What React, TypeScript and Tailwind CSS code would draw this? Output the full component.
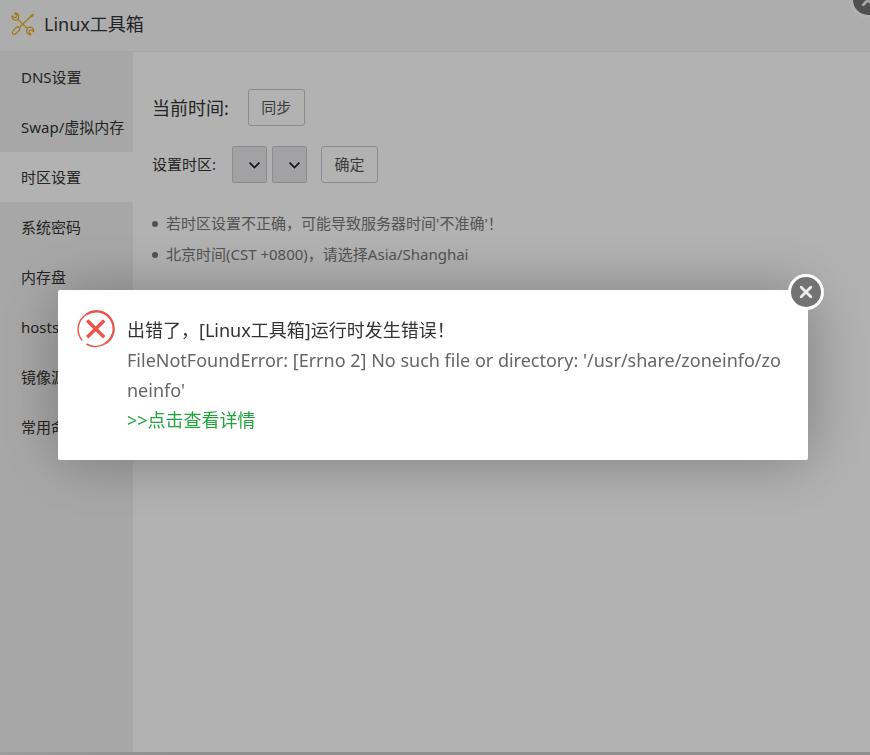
import { useState } from 'react';

const menu = ['DNS设置', 'Swap/虚拟内存', '时区设置', '系统密码', '内存盘', 'hosts管理', '镜像源', '常用命令'];

const tips = ["若时区设置不正确，可能导致服务器时间'不准确'！", '北京时间(CST +0800)，请选择Asia/Shanghai'];

function ToolsIcon() {
  return (
    <svg
      className="size-6 shrink-0 text-[#e8ab1c]"
      viewBox="0 0 24 24"
      fill="none"
      stroke="currentColor"
      strokeWidth="1.2"
      strokeLinecap="round"
      strokeLinejoin="round"
      aria-hidden="true"
    >
      <path d="M3.6 1.2C6.6.8 8.4 3 7.6 5.4L7.4 6.8 6 8 4.4 8.2C2 8 .6 6 1.2 3.8L3.2 5.6 5.4 5.2 5.8 3.2Z" />
      <path d="M7.2 7.6 16.4 16.6" />
      <path d="M20 22.6C17 22.8 15.2 20.4 15.6 18L16 16.4 17.4 15.4 19 15.2C21.6 15 23.2 17.4 22.6 19.8L20.6 18 18.6 18.4 18.2 20.6Z" />
      <path d="M22.2 2.2 20.2 3 19.4 4.4 20.2 4.8 21.6 4ZM19.4 4.8 8.8 15" />
      <path d="M6.8 14.6 8.8 16.4 8.6 17.8 4.8 21.8C2.8 23.4.4 21.4 1.8 19.2L5.4 15.2Z" />
    </svg>
  );
}

function ErrorIcon() {
  return (
    <svg className="mt-5 size-[38px] shrink-0" viewBox="0 0 38 38" fill="none" stroke="#eb5548" aria-hidden="true">
      <path d="M5.2 30.4A17.3 17.3 0 0 1 9.5 4.4" strokeWidth="1.5" />
      <path d="M9.5 4.4A17.3 17.3 0 1 1 28 33.6" strokeWidth="2.3" />
      <path d="M28 33.6A17.3 17.3 0 0 1 9.4 34" strokeWidth="1.7" />
      <path d="M10.2 10.6 27.2 27.2M27.2 10.6 10.2 27.2" strokeWidth="3.5" />
    </svg>
  );
}

function CloseButton({ label, onClick }: { label: string; onClick?: () => void }) {
  return (
    <button
      type="button"
      aria-label={label}
      onClick={onClick}
      className="flex size-9 cursor-pointer items-center justify-center rounded-full border-[3px] border-white bg-[#737373]"
    >
      <svg className="size-4" viewBox="0 0 16 16" stroke="#eee" strokeWidth="2.8" strokeLinecap="round" aria-hidden="true">
        <path d="M3.2 3.2 12.8 12.8M12.8 3.2 3.2 12.8" />
      </svg>
    </button>
  );
}

function ZoneSelect({ label }: { label: string }) {
  return (
    <span className="relative">
      <select
        aria-label={label}
        className="block h-[37px] w-[35px] appearance-none rounded-xs border border-[#c8c8c8] bg-[#e8e8eb]"
      />
      <svg
        className="pointer-events-none absolute top-[15px] right-[6px] h-[9px] w-[13px]"
        viewBox="0 0 13 9"
        fill="none"
        stroke="#222"
        strokeWidth="1.7"
        aria-hidden="true"
      >
        <path d="M1.6 1.6 6.5 6.5 11.4 1.6" />
      </svg>
    </span>
  );
}

const buttonClass = 'h-[37px] w-[57px] cursor-pointer rounded-[3px] border border-[#c8c8c8] bg-white text-[15px] text-[#555]';

export default function App() {
  const [active, setActive] = useState(2);
  const [open, setOpen] = useState(true);

  return (
    <div className="flex min-h-screen flex-col overflow-hidden bg-white font-['Noto_Sans','Noto_Sans_CJK_SC',sans-serif] text-[15px] text-[#333]">
      <header className="relative flex h-[52px] items-center gap-[9px] border-b border-[#eee] bg-[#f8f8f8] px-[11px] pb-[3px]">
        <ToolsIcon />
        <h1 className="text-lg">Linux工具箱</h1>
        <div className="absolute -top-[18px] -right-[16px]">
          <CloseButton label="关闭工具箱" />
        </div>
      </header>

      <div className="flex grow">
        <nav className="w-[133px] shrink-0 bg-[#f0f0f0]">
          {menu.map((item, i) => (
            <button
              key={item}
              type="button"
              onClick={() => setActive(i)}
              className={`block h-[50px] w-full cursor-pointer pl-[21px] text-left whitespace-nowrap ${i === active ? 'bg-white' : ''}`}
            >
              {item}
            </button>
          ))}
        </nav>

        <main className="grow px-[19px] pt-[37px]">
          <div className="flex items-center gap-[19px]">
            <span className="text-lg">当前时间:</span>
            <button type="button" className={buttonClass}>同步</button>
          </div>
          <div className="mt-5 flex items-center">
            <span className="mr-4">设置时区:</span>
            <div className="mr-[14px] flex gap-[5px]">
              <ZoneSelect label="区域" />
              <ZoneSelect label="城市" />
            </div>
            <button type="button" className={buttonClass}>确定</button>
          </div>
          <ul className="mt-[25px] leading-[31px] text-[#777]">
            {tips.map((tip) => (
              <li key={tip} className="flex items-center gap-2">
                <span className="size-[6px] shrink-0 rounded-full bg-[#777]" />
                {tip}
              </li>
            ))}
          </ul>
        </main>
      </div>
      <div className="h-[3px] bg-linear-to-r from-[#e0e0e0] via-[#cdcdcd] via-20% to-[#cdcdcd]" />

      {open && (
        <div className="fixed inset-0 flex items-center justify-center bg-black/30 pr-1 pb-[5px]">
          <div
            role="dialog"
            aria-modal="true"
            aria-label="错误"
            className="relative flex w-full max-w-[750px] gap-3 rounded-xs bg-white px-[19px] pb-[25px] shadow-[1px_1px_62px_rgba(0,0,0,0.3)]"
          >
            <ErrorIcon />
            <div className="min-w-0 pt-[25px] text-lg leading-[30px] text-[#666]">
              <p className="text-[#333]">出错了，[Linux工具箱]运行时发生错误！</p>
              <p className="break-all">FileNotFoundError: [Errno 2] No such file or directory: '/usr/share/zoneinfo/zoneinfo'</p>
              <a href="#detail" className="text-[#20a53a]">&gt;&gt;点击查看详情</a>
            </div>
            <div className="absolute -top-4 -right-4">
              <CloseButton label="关闭" onClick={() => setOpen(false)} />
            </div>
          </div>
        </div>
      )}
    </div>
  );
}
